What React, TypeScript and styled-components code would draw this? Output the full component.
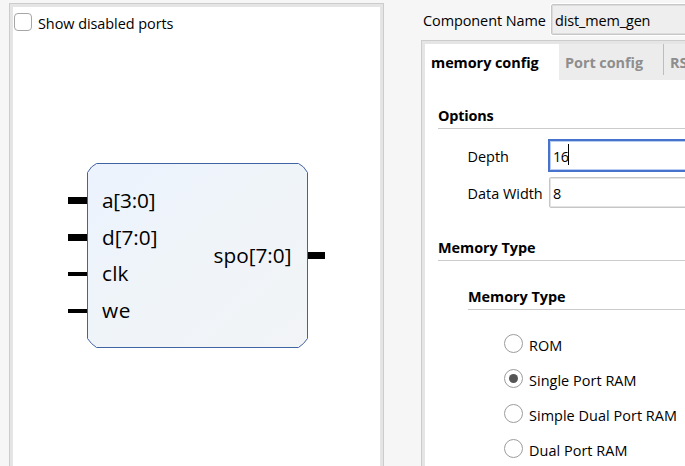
import React from "react";
import styled, { createGlobalStyle, css } from "styled-components";

const GlobalStyle = createGlobalStyle`
  * { box-sizing: border-box; }
  body {
    margin: 0;
    background: #f6f6f6;
    color: #000;
    font: 14.45px/20px "Open Sans", "Noto Sans", sans-serif;
    overflow: hidden;
  }
`;

const Dialog = styled.main`
  display: flex;
  width: 685px;
  height: 466px;
  overflow: hidden;
  white-space: nowrap;
`;

const frame = css`
  border: 1px solid #cccccc;
  border-bottom: 0;
  background: #fff;
  box-shadow: inset 3px 3px 0 #e5e5e5;
`;

const Preview = styled.section`
  ${frame}
  box-shadow: inset 3px 3px 0 #e5e5e5, inset -3px 0 0 #e5e5e5;
  flex: none;
  width: 375px;
  margin: 3px 37px 0 9px;
  padding: 9px 4px 0;
`;

const CheckLabel = styled.label`
  display: flex;
  gap: 6px;
  height: 20px;
`;

const CheckBox = styled.span`
  width: 18px;
  height: 18px;
  border: 1.6px solid #a6a6a6;
  border-radius: 4px;
  background: #fff;
`;

const Text = styled.span<{ $tracking?: number }>`
  letter-spacing: ${(p) => p.$tracking ?? 0}px;
`;

const CheckText = styled(Text)`
  padding-top: 1px;
`;

const Diagram = styled.svg`
  display: block;
  width: 260px;
  height: 186px;
  margin: 130px 0 0 54px;
  font-size: 20.8px;
`;

const Settings = styled.section`
  display: flex;
  flex-direction: column;
  flex: 1;
  min-width: 0;
`;

const NameRow = styled.div`
  display: flex;
  flex: none;
  align-items: flex-start;
  height: 40px;
  padding: 4px 0 0 2px;
`;

const NameLabel = styled.label`
  flex: none;
  width: 127px;
  padding-top: 7px;
  letter-spacing: -0.07px;
`;

const Field = styled.div<{ $readOnly?: boolean; $focused?: boolean }>`
  display: flex;
  align-items: center;
  flex: none;
  width: 150px;
  height: 31px;
  margin-left: 1px;
  padding: 2px 0 0 3px;
  border: 1px solid #c6c6c6;
  border-radius: 2px;
  background: #fff;
  box-shadow: inset 0 0 0 1px #e4e4e4;
  ${(p) => p.$readOnly && css`
    background: #eeeeee;
    box-shadow: 0 0 0 1px #fff, inset 0 0 0 1px #dcdcdc;
  `}
  ${(p) => p.$focused && css`
    height: 33px;
    margin-left: 0;
    border: 2px solid #4773cd;
    border-radius: 0;
    box-shadow: inset 0 0 0 1px #b9cdf3;
  `}
`;

const Caret = styled.i`
  width: 1px;
  height: 21px;
  margin-top: -4px;
  background: #000;
`;

const ConfigPanel = styled.div`
  ${frame}
  flex: 1;
  min-height: 0;
  border-right: 0;
  padding: 3px 0 0 3px;
`;

const Tabs = styled.nav`
  display: flex;
  height: 36px;
  font-weight: 700;
`;

const Tab = styled.div<{ $active?: boolean; $width: number }>`
  flex: none;
  width: ${(p) => p.$width}px;
  height: 36px;
  padding: 9px 0 0 6px;
  letter-spacing: -0.05px;
  color: ${(p) => (p.$active ? "#000" : "#8e8e8e")};
  background: ${(p) => (p.$active ? "#fff" : "#ececec")};
`;

const TabDivider = styled.i`
  flex: none;
  width: 1px;
  height: 31px;
  background: #bdbdbd;
`;

const TabFill = styled.div`
  display: flex;
  background: #ececec;
`;

const Group = styled.section<{ $top: number; $indent: number }>`
  margin: ${(p) => p.$top}px 0 0 ${(p) => p.$indent}px;
`;

const GroupTitle = styled.h2`
  height: 23px;
  margin: 0;
  border-bottom: 1px solid #cbcbcb;
  font: inherit;
  font-weight: 700;
  letter-spacing: -0.05px;
`;

const Fields = styled.div`
  display: flex;
  flex-direction: column;
  gap: 5px;
  padding: 10px 0 0 30px;
`;

const FieldRow = styled.div`
  display: flex;
  align-items: center;
`;

const FieldLabel = styled.label`
  flex: none;
  width: 80px;
  padding-top: 3px;
  text-indent: -0.5px;
`;

const Radios = styled.div`
  display: flex;
  flex-direction: column;
  padding: 17px 0 0 36px;
`;

const RadioRow = styled.label`
  display: flex;
  gap: 6px;
  height: 35px;
  padding-top: 7px;
`;

const RadioDot = styled.span<{ $checked?: boolean }>`
  display: grid;
  place-items: center;
  width: 19px;
  height: 19px;
  border: 1.5px solid #9c9c9c;
  border-radius: 50%;
  &::after {
    content: "";
    width: 9px;
    height: 9px;
    border-radius: 50%;
    background: ${(p) => (p.$checked ? "#555" : "transparent")};
  }
`;

const RadioText = styled.span`
  padding-top: 2px;
  letter-spacing: 0.04px;
`;

const MEMORY_TYPES = ["ROM", "Single Port RAM", "Simple Dual Port RAM", "Dual Port RAM"];
const INPUTS = [
  { name: "a[3:0]", y: 37.5, bus: true, length: 53.5 },
  { name: "d[7:0]", y: 74.5, bus: true, length: 55.5 },
  { name: "clk", y: 111, bus: false, length: 26.5 },
  { name: "we", y: 148, bus: false, length: 28.5 },
];

function BlockSymbol() {
  return (
    <Diagram viewBox="0 0 260 186">
      <defs>
        <linearGradient id="block" x1="0" y1="0" x2="1" y2="1">
          <stop offset="0" stopColor="#ecf3fe" />
          <stop offset="0.45" stopColor="#eff4f9" />
          <stop offset="1" stopColor="#f2f4f6" />
        </linearGradient>
      </defs>
      <path
        d="M28.5 .5H230.5Q236 3 239.5 9.5V175.5Q236 181 230.5 184.5H28.5Q23 181 19.5 175.5V9.5Q23 3 28.5 .5Z"
        fill="url(#block)"
        stroke="#4063a4"
      />
      {INPUTS.map(({ name, y, bus, length }) => (
        <g key={name}>
          <path d={`M0 ${y}H19`} stroke="#000" strokeWidth={bus ? 7 : 4} />
          <text x="34" y={y + (bus ? 7.5 : 7)} textLength={length}>{name}</text>
        </g>
      ))}
      <path d="M240 92.5H257" stroke="#000" strokeWidth="7" />
      <text x="145.5" y="100" textLength="78">spo[7:0]</text>
    </Diagram>
  );
}

export default function App() {
  return (
    <>
      <GlobalStyle />
      <Dialog>
        <Preview>
          <CheckLabel>
            <CheckBox />
            <CheckText $tracking={-0.05}>Show disabled ports</CheckText>
          </CheckLabel>
          <BlockSymbol />
        </Preview>
        <Settings>
          <NameRow>
            <NameLabel>Component Name</NameLabel>
            <Field $readOnly><Text $tracking={-0.12}>dist_mem_gen</Text></Field>
          </NameRow>
          <ConfigPanel>
            <Tabs>
              <Tab $active $width={134}>memory config</Tab>
              <Tab $width={104}>Port config</Tab>
              <TabFill><TabDivider /><Tab $width={60}>RS</Tab></TabFill>
            </Tabs>
            <Group $top={26} $indent={13}>
              <GroupTitle><Text $tracking={-0.2}>Options</Text></GroupTitle>
              <Fields>
                <FieldRow>
                  <FieldLabel>Depth</FieldLabel>
                  <Field $focused><Text $tracking={-0.6}>16</Text><Caret /></Field>
                </FieldRow>
                <FieldRow>
                  <FieldLabel>Data Width</FieldLabel>
                  <Field>8</Field>
                </FieldRow>
              </Fields>
            </Group>
            <Group $top={30} $indent={13}>
              <GroupTitle>Memory Type</GroupTitle>
              <Group $top={26} $indent={30}>
                <GroupTitle>Memory Type</GroupTitle>
                <Radios>
                  {MEMORY_TYPES.map((type) => (
                    <RadioRow key={type}>
                      <RadioDot $checked={type === "Single Port RAM"} />
                      <RadioText>{type}</RadioText>
                    </RadioRow>
                  ))}
                </Radios>
              </Group>
            </Group>
          </ConfigPanel>
        </Settings>
      </Dialog>
    </>
  );
}
